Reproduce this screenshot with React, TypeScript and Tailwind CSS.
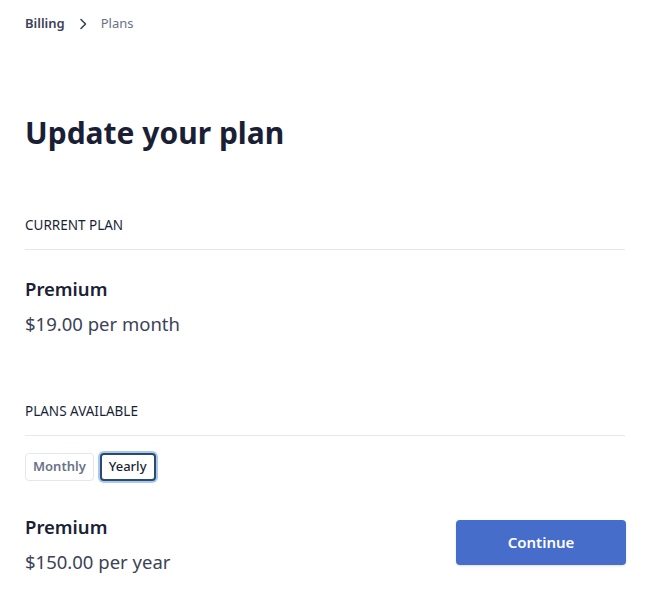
import React from "react";

export default function App() {
  return (
    <div className="min-h-screen bg-white px-[25px] pt-[14px]" style={{ fontFamily: '"Noto Sans", sans-serif' }}>
      <div className="w-[600px]">
        <nav className="flex items-center h-[20px] text-[13px]">
          <span className="font-semibold text-[#3c4257]">Billing</span>
          <svg className="mx-[13px] text-[#3c4257]" width="10" height="12" viewBox="0 0 10 12" fill="none">
            <path d="M3 1.5 L7.5 6 L3 10.5" stroke="currentColor" strokeWidth="1.6" strokeLinecap="round" strokeLinejoin="round" />
          </svg>
          <span className="text-[#697386]">Plans</span>
        </nav>

        <h1 className="mt-[81px] text-[30px] leading-[36px] font-bold text-[#1a1f36]">Update your plan</h1>

        <section className="mt-[66px]">
          <div className="text-[13.5px] leading-[16px] text-[#1a1f36] uppercase pb-[16px] border-b border-[#e3e8ee]">Current plan</div>
          <div className="mt-[27px] text-[18.5px] leading-[24px] font-semibold text-[#1a1f36]">Premium</div>
          <div className="mt-[11px] text-[18.5px] leading-[24px] text-[#3c4257]">$19.00 per month</div>
        </section>

        <section className="mt-[67px]">
          <div className="text-[13.5px] leading-[16px] text-[#1a1f36] uppercase pb-[16px] border-b border-[#e3e8ee]">Plans available</div>
          <div className="mt-[17px] flex gap-[6px]">
            <button className="h-[28px] px-[7px] rounded-[4px] border border-[#e3e8ee] text-[13px] font-semibold text-[#697386] bg-white">Monthly</button>
            <button className="h-[28px] px-[7px] rounded-[4px] border-2 border-[#2d4a6b] ring-2 ring-[#a8c8ef] text-[13px] font-medium text-[#1a1f36] bg-white">Yearly</button>
          </div>
          <div className="mt-[34px] flex items-start justify-between">
            <div>
              <div className="text-[18.5px] leading-[24px] font-semibold text-[#1a1f36]">Premium</div>
              <div className="mt-[11px] text-[18.5px] leading-[24px] text-[#3c4257]">$150.00 per year</div>
            </div>
            <button className="mt-[5px] mr-[-1px] w-[170px] h-[45px] rounded-[4px] bg-[#456dc9] text-white text-[15px] font-semibold shadow-sm">Continue</button>
          </div>
        </section>
      </div>
    </div>
  );
}
